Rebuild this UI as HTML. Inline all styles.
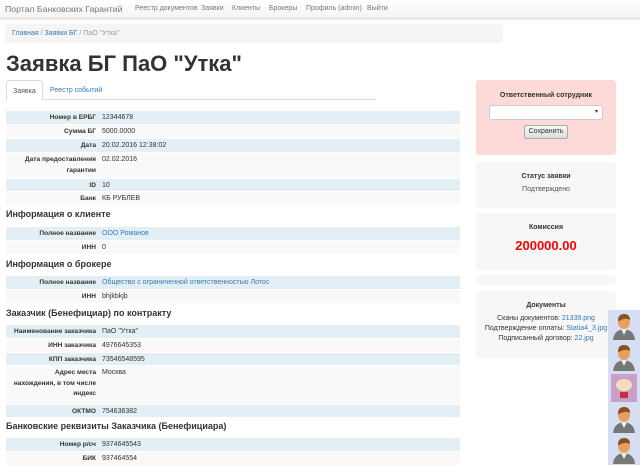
<!DOCTYPE html>
<html><head><meta charset="utf-8"><style>
*{box-sizing:border-box;margin:0;padding:0}
body{width:640px;height:465px;overflow:hidden;background:#fff;font-family:"Liberation Sans",sans-serif;color:#333;position:relative}
.nav{position:absolute;left:0;top:0;width:640px;height:19px;background:linear-gradient(#fff,#f4f4f4);border-bottom:1px solid #ddd;box-shadow:0 1px 3px rgba(0,0,0,.08)}
.nav .brand{position:absolute;left:5px;top:4px;font-size:8.7px;color:#777}
.nav a{position:absolute;top:5px;font-size:7px;color:#777}
.bc{position:absolute;left:5px;top:24px;width:498px;height:19px;background:#f5f5f5;border-radius:3px;font-size:7px;padding:6px 7px;color:#999}
.bc a{color:#337ab7}
h1{position:absolute;left:6px;top:51px;font-size:22px;font-weight:bold;color:#333}
.tabs{position:absolute;left:6px;top:80px;width:370px;height:20px;border-bottom:1px solid #ddd}
.tab{position:absolute;top:0;height:21px;font-size:7px;padding:7px 6px}
.tab.a{left:0;border:1px solid #ddd;border-bottom-color:#fff;background:#fff;border-radius:3px 3px 0 0;color:#555}
.tab.b{left:38px;color:#337ab7}
.t{position:absolute;left:6px;width:454px;font-size:7px}
.r{position:relative;border-top:1px solid #fff}
.r:nth-child(odd){background:#e4eff5}
.r:nth-child(even){background:#f9f9f9}
.l{position:absolute;left:6px;width:84px;text-align:right;font-weight:bold;line-height:10.5px;top:2px;font-size:6.6px}
.v{position:absolute;left:96px;top:2px;line-height:10.5px}
.v a{color:#337ab7}
h4{position:absolute;left:6px;font-size:9px;font-weight:bold;color:#333}
.p{position:absolute;left:476px;width:140px;background:#f7f7f7;border-radius:3px;text-align:center;font-size:7px}
.p b{display:block;color:#333}
.av{position:absolute;left:608px;top:310px;width:32px;height:155px;background:#d6def4}
.u{position:absolute;left:3px;width:26px;height:28px}
</style></head><body>
<div class="nav"><span class="brand">Портал Банковских Гарантий</span>
<a style="left:135px">Реестр документов</a><a style="left:201px">Заявки</a><a style="left:232px">Клиенты</a><a style="left:269px">Брокеры</a><a style="left:306px">Профиль (admin)</a><a style="left:367px">Выйти</a></div>
<div class="bc"><a>Главная</a> / <a>Заявки БГ</a> / ПаО "Утка"</div>
<h1>Заявка БГ ПаО "Утка"</h1>
<div class="tabs"><div class="tab a">Заявка</div><div class="tab b">Реестр событий</div></div>

<div class="t" style="top:110px">
<div class="r" style="height:14px"><span class="l">Номер в ЕРБГ</span><span class="v">12344678</span></div>
<div class="r" style="height:14px"><span class="l">Сумма БГ</span><span class="v">5000.0000</span></div>
<div class="r" style="height:14px"><span class="l">Дата</span><span class="v">20.02.2016 12:38:02</span></div>
<div class="r" style="height:26px"><span class="l">Дата предоставления гарантии</span><span class="v">02.02.2016</span></div>
<div class="r" style="height:13px"><span class="l">ID</span><span class="v">10</span></div>
<div class="r" style="height:14px"><span class="l">Банк</span><span class="v">КБ РУБЛЕВ</span></div>
</div>
<h4 style="top:209px">Информация о клиенте</h4>
<div class="t" style="top:226px">
<div class="r" style="height:14px"><span class="l">Полное название</span><span class="v"><a>ООО Романов</a></span></div>
<div class="r" style="height:14px"><span class="l">ИНН</span><span class="v">0</span></div>
</div>
<h4 style="top:259px">Информация о брокере</h4>
<div class="t" style="top:275px">
<div class="r" style="height:14px"><span class="l">Полное название</span><span class="v"><a>Общество с ограниченной ответственностью Лотос</a></span></div>
<div class="r" style="height:14px"><span class="l">ИНН</span><span class="v">bhjkbkjb</span></div>
</div>
<h4 style="top:308px">Заказчик (Бенефициар) по контракту</h4>
<div class="t" style="top:324px">
<div class="r" style="height:14px"><span class="l">Наименование заказчика</span><span class="v">ПаО "Утка"</span></div>
<div class="r" style="height:14px"><span class="l">ИНН заказчика</span><span class="v">4976645353</span></div>
<div class="r" style="height:13px"><span class="l">КПП заказчика</span><span class="v">73546548595</span></div>
<div class="r" style="height:39px"><span class="l">Адрес места<br>нахождения, в том числе<br>индекс</span><span class="v">Москва</span></div>
<div class="r" style="height:13px"><span class="l">ОКТМО</span><span class="v">754636382</span></div>
</div>
<h4 style="top:421px">Банковские реквизиты Заказчика (Бенефициара)</h4>
<div class="t" style="top:437px">
<div class="r" style="height:14px"><span class="l">Номер р/сч</span><span class="v">9374645543</span></div>
<div class="r" style="height:14px"><span class="l">БИК</span><span class="v">937464554</span></div>
</div>

<div class="p" style="top:80px;height:75px;background:#fdd9d8">
<b style="margin-top:12px">Ответственный сотрудник</b>
<div style="margin:6px auto 0;width:114px;height:15px;background:#fff;border:1px solid #ccc;border-radius:3px;text-align:right;padding:2px 4px;font-size:6px">▾</div>
<div style="margin:5px auto 0;width:44px;height:14px;background:linear-gradient(#f8f8f8,#ddd);border:1px solid #aaa;border-radius:2px;font-size:7px;line-height:12px">Сохранить</div>
</div>
<div class="p" style="top:162px;height:46px"><b style="margin-top:11px">Статус заявки</b><div style="margin-top:6px;color:#555">Подтверждено</div></div>
<div class="p" style="top:213px;height:57px"><b style="margin-top:11px">Комиссия</b><div style="margin-top:7px;color:#f00;font-size:13px;font-weight:bold">200000.00</div></div>
<div class="p" style="top:275px;height:10px"></div>
<div class="p" style="top:291px;height:67px;line-height:10px"><b style="margin-top:10px;margin-bottom:3px">Документы</b>
<div>Сканы документов: <a style="color:#337ab7">21339.png</a></div>
<div>Подтверждение оплаты: <a style="color:#337ab7">Statia4_3.jpg</a></div>
<div>Подписанный договор: <a style="color:#337ab7">22.jpg</a></div></div>

<div class="av">
<svg class="u" style="top:2px" viewBox="0 0 26 28"><path d="M2 28 Q3 18 13 17 Q23 18 24 28Z" fill="#777"/><path d="M10 17 L13 23 L16 17Z" fill="#eee"/><ellipse cx="13" cy="10" rx="6" ry="7" fill="#e8a060"/><path d="M7 9 Q7 2 13 2 Q19 2 19 8 Q15 5 8 9Z" fill="#8a5020"/></svg>
<svg class="u" style="top:33px" viewBox="0 0 26 28"><path d="M2 28 Q3 18 13 17 Q23 18 24 28Z" fill="#777"/><path d="M10 17 L13 23 L16 17Z" fill="#eee"/><ellipse cx="13" cy="10" rx="6" ry="7" fill="#e8a060"/><path d="M7 9 Q7 2 13 2 Q19 2 19 8 Q15 5 8 9Z" fill="#8a5020"/></svg>
<svg class="u" style="top:64px" viewBox="0 0 26 28"><rect width="26" height="28" fill="#c8a0c8"/><ellipse cx="13" cy="11" rx="8" ry="6" fill="#f4dcc0"/><rect x="9" y="18" width="8" height="6" fill="#c03040"/></svg>
<svg class="u" style="top:95px" viewBox="0 0 26 28"><path d="M2 28 Q3 18 13 17 Q23 18 24 28Z" fill="#777"/><path d="M10 17 L13 23 L16 17Z" fill="#eee"/><ellipse cx="13" cy="10" rx="6" ry="7" fill="#e8a060"/><path d="M7 9 Q7 2 13 2 Q19 2 19 8 Q15 5 8 9Z" fill="#8a5020"/></svg>
<svg class="u" style="top:126px" viewBox="0 0 26 28"><path d="M2 28 Q3 18 13 17 Q23 18 24 28Z" fill="#777"/><path d="M10 17 L13 23 L16 17Z" fill="#eee"/><ellipse cx="13" cy="10" rx="6" ry="7" fill="#e8a060"/><path d="M7 9 Q7 2 13 2 Q19 2 19 8 Q15 5 8 9Z" fill="#8a5020"/></svg>
</div>
</body></html>
